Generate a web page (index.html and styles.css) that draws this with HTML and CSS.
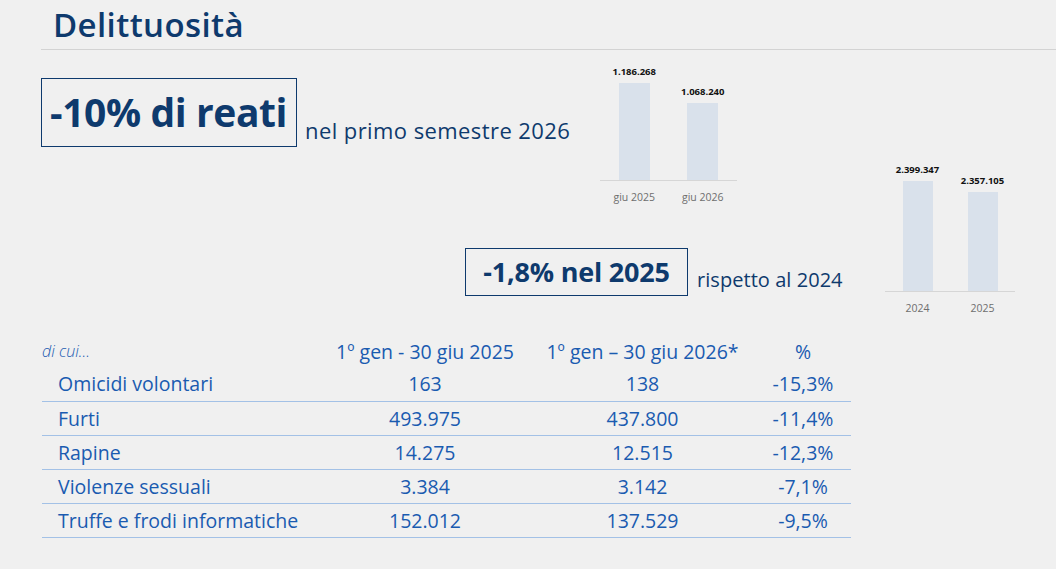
FILE: index.html
```html
<!DOCTYPE html>
<html lang="it">
<head>
<meta charset="utf-8">
<title>Delittuosità</title>
<link rel="stylesheet" href="styles.css">
</head>
<body>
<header class="header">
  <h1 class="title">Delittuosità</h1>
</header>

<section class="hero">
  <div class="hero-main">
    <div class="row1">
      <div class="lead">
        <div class="kpi kpi-big">-10% di reati</div>
        <span class="caption caption-big">nel primo semestre 2026</span>
      </div>
      <div class="chart chart-a">
        <div class="plot">
          <div class="col"><span class="val">1.186.268</span><div class="bar" style="height:97px"></div></div>
          <div class="col"><span class="val">1.068.240</span><div class="bar" style="height:77px"></div></div>
        </div>
        <div class="axis"><span>giu 2025</span><span>giu 2026</span></div>
      </div>
    </div>
    <div class="row2">
      <div class="kpi kpi-mid">-1,8% nel 2025</div>
      <span class="caption caption-mid">rispetto al 2024</span>
    </div>
  </div>
  <div class="chart chart-b">
    <div class="plot">
      <div class="col"><span class="val">2.399.347</span><div class="bar" style="height:110px"></div></div>
      <div class="col"><span class="val">2.357.105</span><div class="bar" style="height:99px"></div></div>
    </div>
    <div class="axis"><span>2024</span><span>2025</span></div>
  </div>
</section>

<table class="data">
  <colgroup>
    <col class="c1"><col class="c2"><col class="c3"><col class="c4">
  </colgroup>
  <thead>
    <tr>
      <th class="dicui">di cui…</th>
      <th>1º gen - 30 giu 2025</th>
      <th>1º gen – 30 giu 2026*</th>
      <th>%</th>
    </tr>
  </thead>
  <tbody>
    <tr><td>Omicidi volontari</td><td>163</td><td>138</td><td>-15,3%</td></tr>
    <tr><td>Furti</td><td>493.975</td><td>437.800</td><td>-11,4%</td></tr>
    <tr><td>Rapine</td><td>14.275</td><td>12.515</td><td>-12,3%</td></tr>
    <tr><td>Violenze sessuali</td><td>3.384</td><td>3.142</td><td>-7,1%</td></tr>
    <tr><td>Truffe e frodi informatiche</td><td>152.012</td><td>137.529</td><td>-9,5%</td></tr>
  </tbody>
</table>
</body>
</html>
```

FILE: styles.css
```css
* { box-sizing: border-box; }

body {
  margin: 0;
  width: 1056px;
  height: 569px;
  overflow: hidden;
  background: #f0f0f0;
  font-family: "Open Sans", "Noto Sans", sans-serif;
  color: #0e3a6d;
}

.header {
  margin-left: 41px;
  height: 50px;
  border-bottom: 1px solid #d3d3d3;
  padding-left: 12px;
}

.title {
  margin: 0;
  padding-top: 5px;
  font-size: 33px;
  line-height: 40px;
  font-weight: 600;
  letter-spacing: 0.4px;
  color: #0e3a6d;
}

.hero {
  display: flex;
  padding-left: 41px;
}

.hero-main {
  width: 844px;
}

.row1 {
  display: flex;
  align-items: flex-start;
}

.lead {
  width: 559px;
  display: flex;
  align-items: flex-end;
  margin-top: 28px;
}

.kpi {
  border: 1px solid #0e3a6d;
  font-weight: 700;
  color: #0e3a6d;
  white-space: nowrap;
}

.kpi-big {
  width: 256px;
  height: 69px;
  font-size: 39px;
  line-height: 66px;
  padding-left: 8px;
  letter-spacing: -0.4px;
}

.caption {
  font-weight: 400;
  color: #0e3a6d;
  white-space: nowrap;
}

.caption-big {
  margin-left: 8px;
  font-size: 22px;
  line-height: 28px;
  letter-spacing: 0.42px;
  padding-bottom: 3px;
}

.row2 {
  display: flex;
  align-items: flex-end;
  padding-left: 424px;
  margin-top: 43px;
}

.kpi-mid {
  width: 223px;
  height: 48px;
  font-size: 27px;
  line-height: 45px;
  text-align: center;
  letter-spacing: -0.2px;
}

.caption-mid {
  margin-left: 9px;
  font-size: 20px;
  line-height: 26px;
  letter-spacing: 0.05px;
  padding-bottom: 3px;
}

/* charts */
.chart-a {
  width: 137px;
  margin-top: 15px;
}

.chart-b {
  width: 130px;
  margin-top: 113px;
}

.plot {
  display: flex;
  align-items: flex-end;
  border-bottom: 1px solid #d6d6d6;
}

.chart-a .plot { height: 116px; }
.chart-b .plot { height: 129px; }

.col {
  flex: 1;
  display: flex;
  flex-direction: column;
  align-items: center;
}

.val {
  font-size: 9.5px;
  font-weight: 700;
  color: #111;
  line-height: 12px;
  margin-bottom: 5px;
  white-space: nowrap;
}

.bar {
  width: 31px;
  background: #d9e1eb;
}

.chart-b .bar { width: 30px; }

.axis {
  display: flex;
  height: 24px;
  align-items: center;
}

.axis span {
  flex: 1;
  text-align: center;
  font-size: 10.5px;
  color: #6e6e6e;
  padding-top: 8px;
}

/* table */
.data {
  margin-left: 42px;
  margin-top: 19px;
  width: 809px;
  border-collapse: collapse;
  table-layout: fixed;
  color: #1a5bb0;
  font-weight: 400;
  font-size: 19.5px;
  letter-spacing: 0;
}

.c1 { width: 278px; }
.c2 { width: 210px; }
.c3 { width: 225px; }
.c4 { width: 96px; }

.data th {
  font-weight: 400;
  height: 32px;
  padding: 0;
  text-align: center;
  white-space: nowrap;
  vertical-align: middle;
}

.data th.dicui {
  text-align: left;
  font-style: italic;
  font-size: 16px;
  font-weight: 300;
}

.data td {
  height: 34px;
  padding: 0;
  text-align: center;
  vertical-align: middle;
  border-bottom: 1px solid #a3c1e6;
  white-space: nowrap;
}

.data td:first-child {
  text-align: left;
  padding-left: 16px;
}
```
